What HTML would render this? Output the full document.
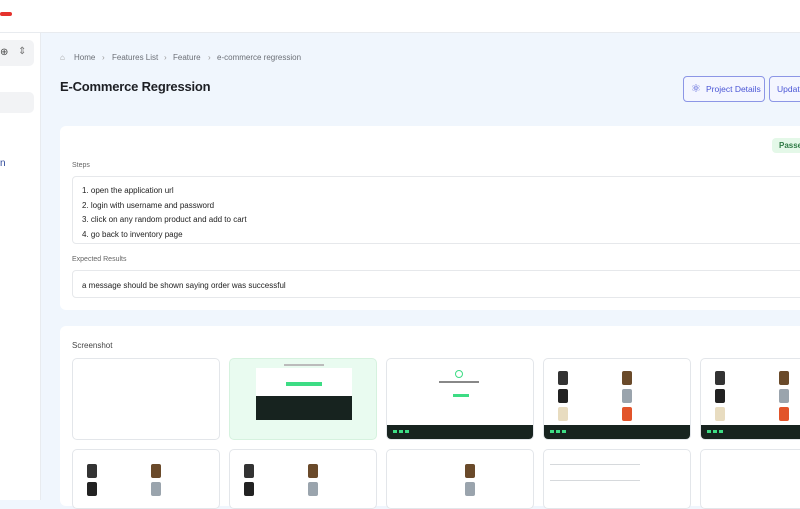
<!DOCTYPE html>
<html><head><style>
*{box-sizing:border-box;margin:0;padding:0}
body{width:800px;height:500px;overflow:hidden;font-family:"Liberation Sans",sans-serif;background:#f0f6fd;position:relative}
.a{position:absolute}
.bc{position:absolute;top:53px;font-size:8px;color:#6b6f76}
.th{position:absolute;width:148px;border:1px solid #e3e6ea;border-radius:5px;background:#fff;overflow:hidden}
.ft{position:absolute;left:0;right:0;bottom:0;height:14px;background:#17231f}
.ft i{position:absolute;top:5px;width:4px;height:3px;background:#3ddc84}
.g{position:absolute;background:#d6d9dc;height:1px}
.pr{position:absolute;width:10px;height:14px;border-radius:2px}
</style></head><body>
<div class="a" style="left:0;top:0;width:800px;height:33px;background:#fff;border-bottom:1px solid #e8ebef"></div>
<div class="a" style="left:0;top:12px;width:12px;height:4px;background:#e5322d;border-radius:2px"></div>
<div class="a" style="left:0;top:33px;width:41px;height:467px;background:#fff;border-right:1px solid #e8ebef"></div>
<div class="a" style="left:-6px;top:40px;width:40px;height:26px;background:#f2f3f5;border-radius:5px"></div>
<div class="a" style="left:0;top:47px;font-size:10px;color:#444">⊕</div>
<div class="a" style="left:18px;top:46px;font-size:10px;color:#777">⇕</div>
<div class="a" style="left:-6px;top:92px;width:40px;height:21px;background:#f2f3f5;border-radius:5px"></div>
<div class="a" style="left:0;top:158px;font-size:10px;color:#2f4a9a">n</div>

<div class="bc" style="left:60px;color:#999">⌂</div>
<div class="bc" style="left:74px">Home</div>
<div class="bc" style="left:102px;color:#999">›</div>
<div class="bc" style="left:112px">Features List</div>
<div class="bc" style="left:164px;color:#999">›</div>
<div class="bc" style="left:173px">Feature</div>
<div class="bc" style="left:208px;color:#999">›</div>
<div class="bc" style="left:217px">e-commerce regression</div>
<div class="a" style="left:60px;top:79px;font-size:13px;font-weight:bold;color:#1d1f24;letter-spacing:-0.2px">E-Commerce Regression</div>
<div class="a" style="left:683px;top:76px;width:82px;height:26px;border:1px solid #8c96e6;border-radius:4px;background:#f4f6ff"></div>
<div class="a" style="left:691px;top:82px;font-size:11px;color:#4a55d6">⚛</div>
<div class="a" style="left:706px;top:84px;font-size:8.5px;color:#4a55d6">Project Details</div>
<div class="a" style="left:769px;top:76px;width:60px;height:26px;border:1px solid #8c96e6;border-radius:4px;background:#f4f6ff"></div>
<div class="a" style="left:777px;top:84px;font-size:8.5px;color:#4a55d6">Update</div>

<div class="a" style="left:60px;top:126px;width:760px;height:184px;background:#fff;border-radius:6px"></div>
<div class="a" style="left:772px;top:138px;width:40px;height:15px;background:#e4f8e8;border-radius:4px"></div>
<div class="a" style="left:779px;top:141px;font-size:8px;color:#2f7a45;font-weight:bold">Passed</div>
<div class="a" style="left:72px;top:162px;font-size:7px;color:#666">Steps</div>
<div class="a" style="left:72px;top:176px;width:740px;height:68px;border:1px solid #e6e8eb;border-radius:4px;overflow:hidden;font-size:8px;color:#222;line-height:14.5px;padding:7px 0 0 9px">1. open the application url<br>2. login with username and password<br>3. click on any random product and add to cart<br>4. go back to inventory page</div>
<div class="a" style="left:72px;top:256px;font-size:7px;color:#666">Expected Results</div>
<div class="a" style="left:72px;top:270px;width:740px;height:28px;border:1px solid #e6e8eb;border-radius:4px;font-size:8px;color:#222;padding:10px 0 0 9px">a message should be shown saying order was successful</div>

<div class="a" style="left:60px;top:326px;width:760px;height:180px;background:#fff;border-radius:6px"></div>
<div class="a" style="left:72px;top:341px;font-size:8px;color:#444">Screenshot</div>

<div class="th" style="left:72px;top:358px;height:82px"></div>
<div class="th" style="left:229px;top:358px;height:82px;background:#e9fbf0;border-color:#d6f2df">
 <div class="a" style="left:54px;top:5px;width:40px;height:2px;background:#bbb"></div>
 <div class="a" style="left:26px;top:9px;width:96px;height:28px;background:#fff"></div>
 <div class="a" style="left:56px;top:23px;width:36px;height:4px;background:#3ddc84"></div>
 <div class="a" style="left:26px;top:37px;width:96px;height:24px;background:#17231f"></div>
</div>
<div class="th" style="left:386px;top:358px;height:82px">
 <div class="a" style="left:68px;top:11px;width:8px;height:8px;border:1px solid #3ddc84;border-radius:50%"></div>
 <div class="a" style="left:52px;top:22px;width:40px;height:2px;background:#888"></div>
 <div class="a" style="left:66px;top:35px;width:16px;height:3px;background:#3ddc84"></div>
 <div class="ft"><i style="left:6px"></i><i style="left:12px"></i><i style="left:18px"></i></div>
</div>
<div class="th" style="left:543px;top:358px;height:82px">
 <div class="pr" style="left:14px;top:12px;background:#333"></div><div class="pr" style="left:78px;top:12px;background:#6a4a2a"></div>
 <div class="pr" style="left:14px;top:30px;background:#222"></div><div class="pr" style="left:78px;top:30px;background:#9aa4ad"></div>
 <div class="pr" style="left:14px;top:48px;background:#e8dcc0"></div><div class="pr" style="left:78px;top:48px;background:#e2542a"></div>
 <div class="ft"><i style="left:6px"></i><i style="left:12px"></i><i style="left:18px"></i></div>
</div>
<div class="th" style="left:700px;top:358px;height:82px">
 <div class="pr" style="left:14px;top:12px;background:#333"></div><div class="pr" style="left:78px;top:12px;background:#6a4a2a"></div>
 <div class="pr" style="left:14px;top:30px;background:#222"></div><div class="pr" style="left:78px;top:30px;background:#9aa4ad"></div>
 <div class="pr" style="left:14px;top:48px;background:#e8dcc0"></div><div class="pr" style="left:78px;top:48px;background:#e2542a"></div>
 <div class="ft"><i style="left:6px"></i><i style="left:12px"></i><i style="left:18px"></i></div>
</div>
<div class="th" style="left:72px;top:449px;height:60px"><div class="pr" style="left:14px;top:14px;background:#333"></div><div class="pr" style="left:78px;top:14px;background:#6a4a2a"></div><div class="pr" style="left:14px;top:32px;background:#222"></div><div class="pr" style="left:78px;top:32px;background:#9aa4ad"></div></div>
<div class="th" style="left:229px;top:449px;height:60px"><div class="pr" style="left:14px;top:14px;background:#333"></div><div class="pr" style="left:78px;top:14px;background:#6a4a2a"></div><div class="pr" style="left:14px;top:32px;background:#222"></div><div class="pr" style="left:78px;top:32px;background:#9aa4ad"></div></div>
<div class="th" style="left:386px;top:449px;height:60px"><div class="pr" style="left:78px;top:14px;background:#6a4a2a"></div><div class="pr" style="left:78px;top:32px;background:#9aa4ad"></div></div>
<div class="th" style="left:543px;top:449px;height:60px"><div class="g" style="left:6px;top:14px;width:90px"></div><div class="g" style="left:6px;top:30px;width:90px"></div></div>
<div class="th" style="left:700px;top:449px;height:60px"></div>
</body></html>
